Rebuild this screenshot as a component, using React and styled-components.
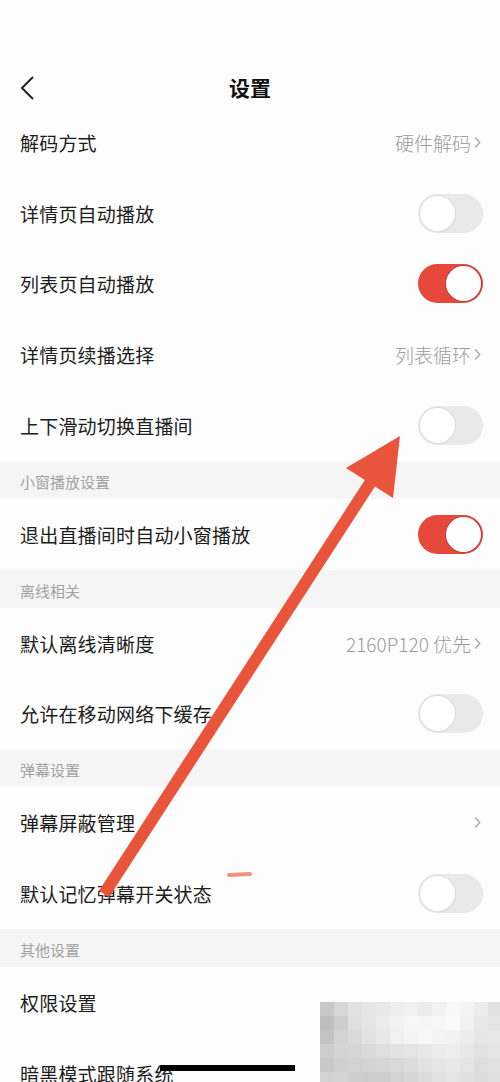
import React from "react";
import styled, { createGlobalStyle } from "styled-components";

const Global = createGlobalStyle`
  html, body { margin: 0; padding: 0; background: #fdfdfd; }
  body { font-family: "Noto Sans CJK SC", "Noto Sans", sans-serif; }
`;

const Page = styled.div`
  position: relative;
  width: 500px;
  height: 1082px;
  overflow: hidden;
  background: #fdfdfd;
`;

const Header = styled.div`
  height: 107px;
  display: flex;
  align-items: flex-start;
  justify-content: center;
  position: relative;
  padding-top: 69px;
  box-sizing: border-box;
`;

const BackButton = styled.div`
  position: absolute;
  left: 18px;
  top: 75px;
  width: 20px;
  height: 26px;
`;

const Title = styled.div`
  font-size: 21px;
  font-weight: 700;
  color: #111;
  line-height: 36px;
`;

const Row = styled.div`
  height: 70.8px;
  display: flex;
  align-items: center;
  justify-content: space-between;
  padding: 0 17px 0 20px;
  background: #fdfdfd;
`;

const Label = styled.div`
  font-size: 19px;
  color: #1c1c1c;
  letter-spacing: 0.2px;
`;

const Value = styled.div`
  display: flex;
  align-items: center;
  gap: 3px;
  font-size: 19px;
  font-weight: 300;
  color: #9c9c9c;
  padding-right: 2px;
`;

const Section = styled.div`
  height: 38px;
  display: flex;
  align-items: center;
  padding: 3px 20px 0;
  box-sizing: border-box;
  background: #f5f5f5;
  font-size: 15px;
  color: #a2a2a2;
`;

const Track = styled.div`
  width: 65px;
  height: 39px;
  border-radius: 20px;
  background: ${(p) => (p.$on ? "#e6493c" : "#e9e9e9")};
  position: relative;
  box-sizing: border-box;
`;

const Knob = styled.div`
  position: absolute;
  top: 2px;
  left: ${(p) => (p.$on ? "28px" : "2px")};
  width: 35px;
  height: 35px;
  border-radius: 50%;
  background: #fff;
  box-shadow: ${(p) =>
    p.$on ? "0 0 0 1px rgba(150,50,40,0.5)" : "0 0 0 1px #dcdcdc, 0 1px 2px rgba(0,0,0,0.08)"};
`;

const Overlay = styled.svg`
  position: absolute;
  left: 0;
  top: 0;
  pointer-events: none;
`;

const HomeBar = styled.div`
  position: absolute;
  left: 160px;
  top: 1065px;
  width: 135px;
  height: 6px;
  background: #000;
`;

const Mosaic = styled.svg`
  position: absolute;
  left: 320px;
  top: 1002px;
`;

const Chevron = () => (
  <svg width="7" height="13" viewBox="0 0 7 13">
    <path d="M1.2 1.5 L5.8 6.5 L1.2 11.5" fill="none" stroke="#a8a8a8" strokeWidth="1.4" />
  </svg>
);

const Toggle = ({ on }) => (
  <Track $on={on}>
    <Knob $on={on} />
  </Track>
);

const items = [
  { t: "row", label: "解码方式", value: "硬件解码" },
  { t: "row", label: "详情页自动播放", toggle: false },
  { t: "row", label: "列表页自动播放", toggle: true },
  { t: "row", label: "详情页续播选择", value: "列表循环" },
  { t: "row", label: "上下滑动切换直播间", toggle: false },
  { t: "sec", label: "小窗播放设置" },
  { t: "row", label: "退出直播间时自动小窗播放", toggle: true },
  { t: "sec", label: "离线相关" },
  { t: "row", label: "默认离线清晰度", value: "2160P120 优先" },
  { t: "row", label: "允许在移动网络下缓存", toggle: false },
  { t: "sec", label: "弹幕设置" },
  { t: "row", label: "弹幕屏蔽管理", value: "" },
  { t: "row", label: "默认记忆弹幕开关状态", toggle: false },
  { t: "sec", label: "其他设置" },
  { t: "row", label: "权限设置" },
  { t: "row", label: "暗黑模式跟随系统" },
];

const mosaicCells = (() => {
  const cells = [];
  const shades = [
    [200, 215, 225, 230, 232, 238, 240, 236, 242, 248, 244, 236, 225],
    [190, 205, 222, 228, 236, 242, 246, 245, 248, 250, 240, 232, 228],
    [195, 210, 218, 226, 232, 240, 244, 246, 244, 242, 236, 230, 232],
    [205, 212, 214, 218, 222, 226, 228, 232, 236, 238, 232, 226, 230],
    [200, 208, 210, 212, 214, 216, 220, 226, 230, 232, 228, 222, 226],
    [210, 212, 206, 204, 206, 210, 214, 220, 226, 228, 224, 220, 222],
  ];
  shades.forEach((r, y) =>
    r.forEach((v, x) => cells.push({ x: x * 14, y: y * 14, v }))
  );
  return cells;
})();

export default function App() {
  return (
    <Page>
      <Global />
      <Header>
        <BackButton>
          <svg width="20" height="26" viewBox="0 0 20 26">
            <path d="M15 2 L4 13 L15 24" fill="none" stroke="#222" strokeWidth="2" />
          </svg>
        </BackButton>
        <Title>设置</Title>
      </Header>
      {items.map((it, i) =>
        it.t === "sec" ? (
          <Section key={i}>{it.label}</Section>
        ) : (
          <Row key={i}>
            <Label>{it.label}</Label>
            {it.toggle !== undefined ? (
              <Toggle on={it.toggle} />
            ) : it.value !== undefined ? (
              <Value>
                {it.value}
                <Chevron />
              </Value>
            ) : null}
          </Row>
        )
      )}
      <Mosaic width="180" height="80" viewBox="0 0 180 80">
        {mosaicCells.map((c, i) => (
          <rect
            key={i}
            x={c.x}
            y={c.y}
            width="14"
            height="14"
            fill={`rgb(${c.v},${c.v},${c.v})`}
          />
        ))}
      </Mosaic>
      <HomeBar />
      <Overlay width="500" height="1082" viewBox="0 0 500 1082">
        <line x1="104" y1="894" x2="372" y2="480" stroke="#e8553a" strokeWidth="12" />
        <polygon points="346,468 400,436 393,498" fill="#e8553a" />
        <line x1="229" y1="875" x2="250" y2="874" stroke="#f0937f" strokeWidth="4" strokeLinecap="round" />
      </Overlay>
    </Page>
  );
}
